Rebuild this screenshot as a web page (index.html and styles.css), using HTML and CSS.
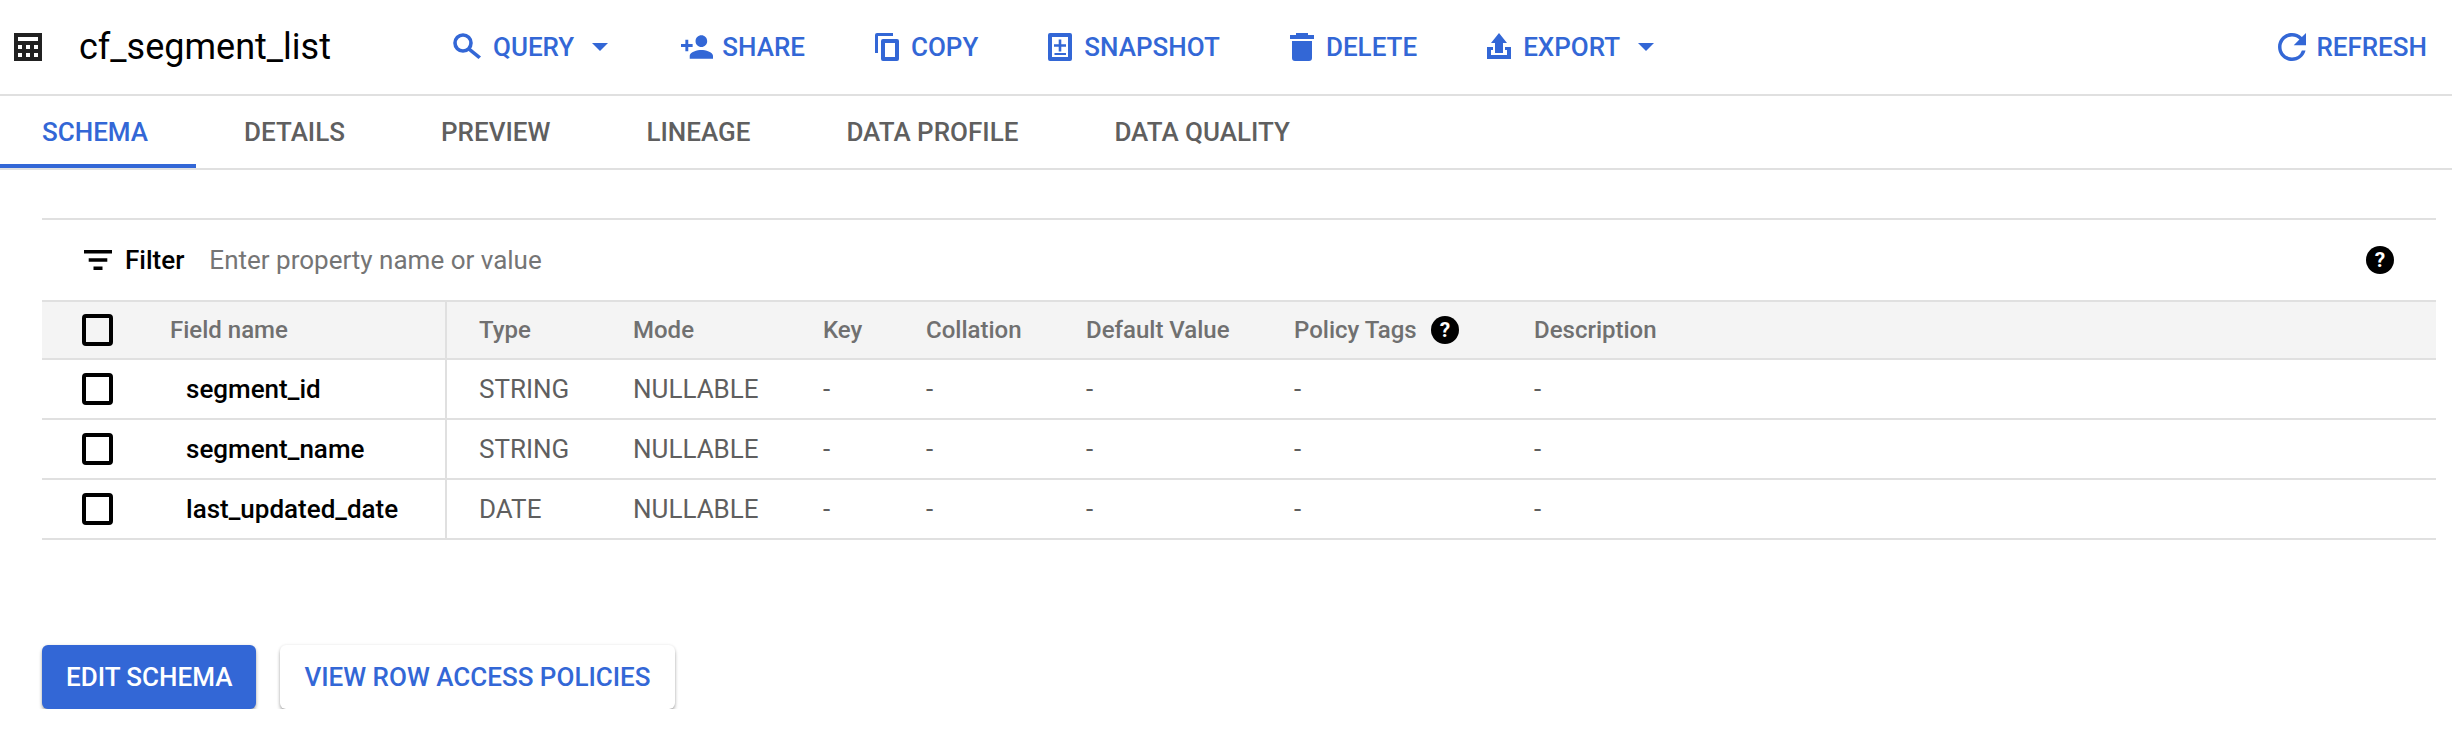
FILE: index.html
```html
<!DOCTYPE html>
<html lang="en">
<head>
  <meta charset="UTF-8" />
  <title>cf_segment_list</title>
  <link rel="stylesheet" href="styles.css">
</head>
<body>
  <header class="toolbar">
    <svg class="table-icon" viewBox="0 0 28 28"><path fill="#212121" d="M0 0h28v28H0z"/><path fill="#fff" d="M4 4h20v4H4zM4 12h4v4H4zM12 12h4v4h-4zM20 12h4v4h-4zM4 20h4v4H4zM12 20h4v4h-4zM20 20h4v4h-4z"/></svg>
    <h1 class="title">cf_segment_list</h1>
    <nav class="actions">
      <a class="action">
        <svg class="lift" width="28" height="26" viewBox="0 0 28 26"><circle cx="10" cy="10" r="8" fill="none" stroke="#3367d6" stroke-width="3.600"/><path d="M15 17.500l2.500-2.500L28 23.500 25.500 26z"/></svg>
        QUERY
        <span class="caret"></span>
      </a>
      <a class="action share">
        <svg width="32" height="24" viewBox="1 4 22 16"><path d="M15 12c2.210 0 4-1.790 4-4s-1.790-4-4-4-4 1.790-4 4 1.790 4 4 4zm-9-2V7H4v3H1v2h3v3h2v-3h3v-2H6zm9 4c-2.670 0-8 1.340-8 4v2h16v-2c0-2.660-5.330-4-8-4z"/></svg>
        SHARE
      </a>
      <a class="action">
        <svg width="24" height="28" viewBox="0 0 24 28"><path fill-rule="evenodd" d="M2 0h16v3H3v17H0V2a2 2 0 0 1 2-2zM8 6h14a2 2 0 0 1 2 2v18a2 2 0 0 1-2 2H8a2 2 0 0 1-2-2V8a2 2 0 0 1 2-2zm2 4v14h10V10H10z"/></svg>
        COPY
      </a>
      <a class="action">
        <svg width="24" height="28" viewBox="0 0 24 28"><path fill-rule="evenodd" d="M2 0h20a2 2 0 0 1 2 2v24a2 2 0 0 1-2 2H2a2 2 0 0 1-2-2V2a2 2 0 0 1 2-2zm2 4v20h16V4H4zm6.700 2.500h2.600v4.700H18v2.600h-4.700v4.700h-2.600v-4.700H6v-2.600h4.700V6.500zM6.500 20h11.500v2H6.500v-2z"/></svg>
        SNAPSHOT
      </a>
      <a class="action">
        <svg width="24" height="28" viewBox="0 0 24 28"><path d="M6 0h12v2h6v4H0V2h6zM2 8h20v17a3 3 0 0 1-3 3H5a3 3 0 0 1-3-3z"/></svg>
        DELETE
      </a>
      <a class="action">
        <svg class="lift" width="24" height="26" viewBox="0 0 24 26"><path d="M12 0l8 10h-4v10H8V10H4zM0 14h6v3H4v5h16v-5h-2v-3h6v12H0z"/></svg>
        EXPORT
        <span class="caret"></span>
      </a>
    </nav>
    <a class="action refresh">
      <svg width="28" height="28" viewBox="4 4 16 16"><path d="M17.650 6.350A7.958 7.958 0 0 0 12 4c-4.420 0-7.990 3.580-7.990 8s3.570 8 7.990 8c3.730 0 6.840-2.550 7.730-6h-2.080A5.990 5.990 0 0 1 12 18c-3.310 0-6-2.690-6-6s2.690-6 6-6c1.660 0 3.140.69 4.220 1.780L13 11h7V4l-2.350 2.350z"/></svg>
      REFRESH
    </a>
  </header>

  <div class="tabs">
    <a class="tab active">SCHEMA</a>
    <a class="tab">DETAILS</a>
    <a class="tab">PREVIEW</a>
    <a class="tab">LINEAGE</a>
    <a class="tab">DATA PROFILE</a>
    <a class="tab">DATA QUALITY</a>
  </div>

  <main class="content">
    <div class="filter">
      <svg class="filter-icon" viewBox="0 0 28 20"><path d="M0 0h28v3.400H0zM4.700 8.300h18.600v3.400H4.700zM9.500 16.600h9v3.400h-9z"/></svg>
      <span class="filter-label">Filter</span>
      <span class="filter-hint">Enter property name or value</span>
      <svg class="help filter-help" viewBox="0 0 28 28"><circle cx="14" cy="14" r="14"/><text x="14" y="21" class="help-mark">?</text></svg>
    </div>

    <div class="row head">
      <div class="cell-check"><span class="checkbox"></span></div>
      <div class="cell-name">Field name</div>
      <div class="cell-type">Type</div>
      <div>Mode</div>
      <div>Key</div>
      <div>Collation</div>
      <div>Default Value</div>
      <div class="policy">Policy Tags <svg class="help" viewBox="0 0 28 28"><circle cx="14" cy="14" r="14"/><text x="14" y="21" class="help-mark">?</text></svg></div>
      <div>Description</div>
    </div>

    <div class="row">
      <div class="cell-check"><span class="checkbox"></span></div>
      <div class="cell-name field">segment_id</div>
      <div class="cell-type">STRING</div>
      <div>NULLABLE</div>
      <div>-</div><div>-</div><div>-</div><div>-</div><div>-</div>
    </div>
    <div class="row">
      <div class="cell-check"><span class="checkbox"></span></div>
      <div class="cell-name field">segment_name</div>
      <div class="cell-type">STRING</div>
      <div>NULLABLE</div>
      <div>-</div><div>-</div><div>-</div><div>-</div><div>-</div>
    </div>
    <div class="row">
      <div class="cell-check"><span class="checkbox"></span></div>
      <div class="cell-name field">last_updated_date</div>
      <div class="cell-type">DATE</div>
      <div>NULLABLE</div>
      <div>-</div><div>-</div><div>-</div><div>-</div><div>-</div>
    </div>

    <div class="buttons">
      <button class="btn primary">EDIT SCHEMA</button>
      <button class="btn secondary">VIEW ROW ACCESS POLICIES</button>
    </div>
  </main>
</body>
</html>
```

FILE: styles.css
```css
body {
  margin: 0;
  background: #fff;
  font-family: Roboto, "Liberation Sans", sans-serif;
  color: #000;
  overflow: hidden;
}

.toolbar {
  display: flex;
  align-items: center;
  height: 94px;
  padding: 0 25px 0 14px;
  border-bottom: 2px solid #e0e0e0;
}

.table-icon {
  width: 28px;
  height: 28px;
  flex: none;
}

.title {
  width: 374px;
  margin: 0 0 0 37px;
  font-size: 36px;
  font-weight: 400;
}

.actions {
  display: flex;
  gap: 70px;
}

.action {
  display: flex;
  align-items: center;
  gap: 12px;
  font-size: 26px;
  font-weight: 500;
  color: #3367d6;
}

.action svg {
  fill: #3367d6;
  flex: none;
}

.action svg.lift {
  margin-bottom: 2px;
}

.share {
  gap: 9px;
  padding-left: 3px;
}

.caret {
  width: 0;
  height: 0;
  margin-left: 6px;
  border-left: 8px solid transparent;
  border-right: 8px solid transparent;
  border-top: 8px solid #3367d6;
}

.refresh {
  margin-left: auto;
  gap: 10px;
}

.tabs {
  display: flex;
  height: 72px;
  border-bottom: 2px solid #e0e0e0;
}

.tab {
  display: flex;
  align-items: center;
  padding: 0 48px;
  font-size: 26px;
  font-weight: 500;
  color: #5f5f5f;
}

.tab.active {
  padding-left: 42px;
  color: #3367d6;
  box-shadow: inset 0 -4px 0 #3367d6;
}

.content {
  padding: 48px 16px 0 42px;
}

.filter {
  display: flex;
  align-items: center;
  height: 80px;
  padding-left: 42px;
  border-top: 2px solid #e0e0e0;
}

.filter-icon {
  width: 28px;
  height: 20px;
  margin-right: 13px;
}

.filter-label {
  font-size: 26px;
  font-weight: 500;
  margin-right: 25px;
}

.filter-hint {
  font-size: 26px;
  color: #757575;
}

.help {
  width: 28px;
  height: 28px;
}

.help-mark {
  font-size: 21px;
  font-weight: 700;
  fill: #fff;
  text-anchor: middle;
}

.filter-help {
  margin-left: auto;
  margin-right: 42px;
}

.row {
  display: grid;
  grid-template-columns: 128px 275px 188px 190px 103px 160px 208px 240px 1fr;
  height: 58px;
  border-bottom: 2px solid #e0e0e0;
  align-items: center;
  font-size: 26px;
  color: #5f5f5f;
}

.row > div {
  height: 100%;
  display: flex;
  align-items: center;
}

.head {
  background: #f4f4f4;
  border-top: 2px solid #e0e0e0;
  height: 56px;
  font-size: 24px;
  font-weight: 500;
  color: #707070;
}

.cell-check {
  padding-left: 40px;
}

.checkbox {
  display: block;
  width: 31px;
  height: 32px;
  box-sizing: border-box;
  border: 4px solid #000;
  border-radius: 4px;
}

.field {
  padding-left: 16px;
  font-weight: 500;
  color: #000;
}

.row .cell-type {
  border-left: 2px solid #e0e0e0;
  padding-left: 32px;
}

.policy {
  gap: 14px;
}

.buttons {
  display: flex;
  gap: 24px;
  margin-top: 105px;
}

.btn {
  height: 64px;
  padding: 0 24px;
  border: none;
  border-radius: 6px;
  font-family: inherit;
  font-size: 26px;
  font-weight: 500;
  box-shadow: 0 3px 4px -1px rgba(0,0,0,0.45), 0 0 3px rgba(0,0,0,0.1);
}

.primary {
  background: #3367d6;
  color: #fff;
}

.secondary {
  background: #fff;
  color: #3367d6;
}
```
